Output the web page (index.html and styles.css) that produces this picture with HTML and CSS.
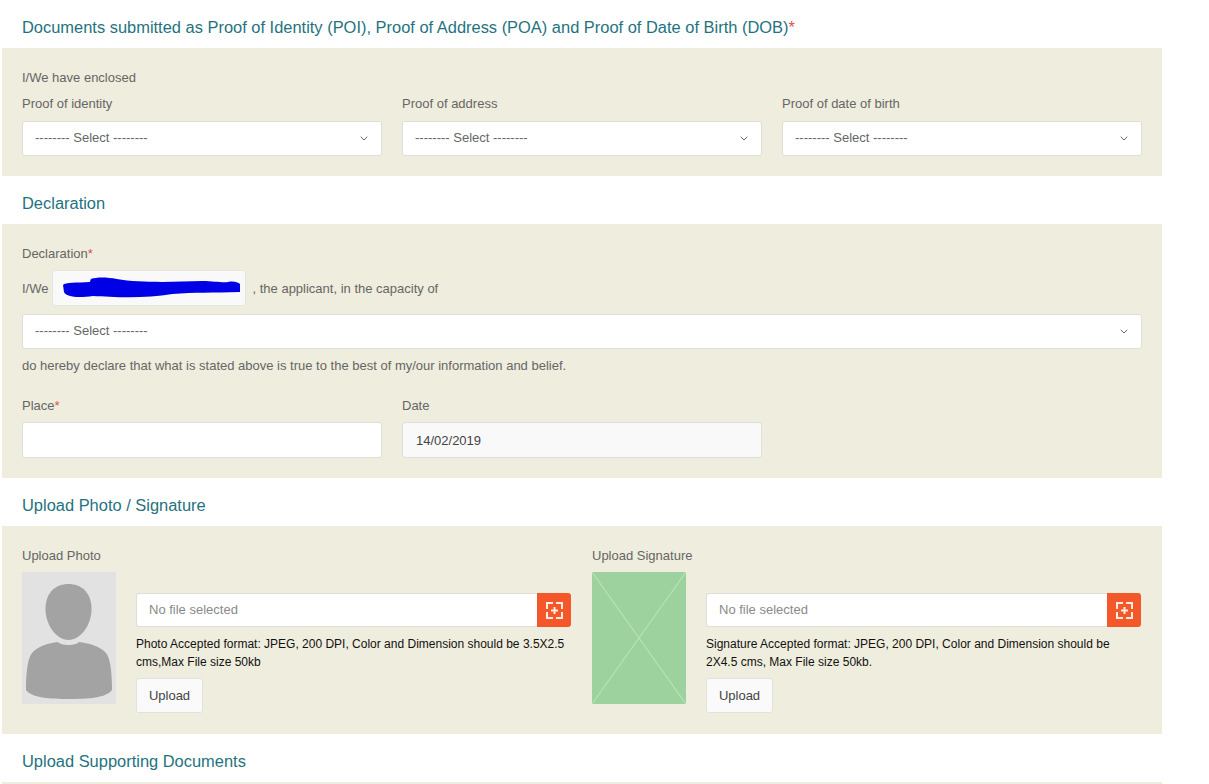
FILE: index.html
```html
<!DOCTYPE html>
<html lang="en">
<head>
<meta charset="utf-8">
<title>Documents</title>
<link rel="stylesheet" href="styles.css">
</head>
<body>
<main class="page">
  <h2 class="heading">Documents submitted as Proof of Identity (POI), Proof of Address (POA) and Proof of Date of Birth (DOB)<span class="req">*</span></h2>
  <section class="panel panel-docs">
    <p class="label label-tight">I/We have enclosed</p>
    <div class="cols3">
      <div class="field">
        <label class="label">Proof of identity</label>
        <div class="select"><span>-------- Select --------</span><svg class="chev" viewBox="0 0 8 5"><path d="M.7.8 4 4 7.3.8"/></svg></div>
      </div>
      <div class="field">
        <label class="label">Proof of address</label>
        <div class="select"><span>-------- Select --------</span><svg class="chev" viewBox="0 0 8 5"><path d="M.7.8 4 4 7.3.8"/></svg></div>
      </div>
      <div class="field">
        <label class="label">Proof of date of birth</label>
        <div class="select"><span>-------- Select --------</span><svg class="chev" viewBox="0 0 8 5"><path d="M.7.8 4 4 7.3.8"/></svg></div>
      </div>
    </div>
  </section>

  <h2 class="heading">Declaration</h2>
  <section class="panel panel-decl">
    <p class="label">Declaration<span class="req">*</span></p>
    <div class="iwe">
      <span>I/We</span>
      <div class="name-box">
        <svg class="scribble" viewBox="0 0 178 22" preserveAspectRatio="none"><path d="M0 8C2 5 14 6 27 5L28 2C34 0 44 0 54 2C78 6 110 5 140 4C152 4 160 6 166 5C171 4 176 5 178 7L178 15C150 16 132 15 110 17C82 22 50 20 30 19C15 21 3 20 1 15Z"/></svg>
      </div>
      <span>, the applicant, in the capacity of</span>
    </div>
    <div class="select"><span>-------- Select --------</span><svg class="chev" viewBox="0 0 8 5"><path d="M.7.8 4 4 7.3.8"/></svg></div>
    <p class="label hereby">do hereby declare that what is stated above is true to the best of my/our information and belief.</p>
    <div class="cols3 place-row">
      <div class="field">
        <label class="label">Place<span class="req">*</span></label>
        <div class="input"></div>
      </div>
      <div class="field">
        <label class="label">Date</label>
        <div class="input input-ro">14/02/2019</div>
      </div>
    </div>
  </section>

  <h2 class="heading">Upload Photo / Signature</h2>
  <section class="panel panel-upload">
    <div class="cols2">
      <div>
        <p class="label">Upload Photo</p>
        <div class="upload">
          <svg class="thumb" viewBox="0 0 94 132">
            <rect width="94" height="132" fill="#e2e2e2"/>
            <path fill="#a3a3a3" d="M46.500 12C59 12 69 20 69.500 36C70 52 59 68 46.500 68C34 68 23 52 23.500 36C24 20 34 12 46.500 12Z"/>
            <path fill="#a3a3a3" d="M36 70C39 74 54 74 57 70C66 71 78 74 84 81C89 87 90 104 90 118C84 126 66 127 47 127C28 127 10 126 4 118C4 104 5 87 10 81C16 74 27 71 36 70Z"/>
          </svg>
          <div class="upload-main">
            <div class="filebar">
              <div class="fileinput">No file selected</div>
              <div class="filebtn"><svg viewBox="0 0 17 17"><path d="M1 7V1h6M10 1h6v6M16 10v6h-6M7 16H1v-6M8.500 5v7M5 8.500h7"/></svg></div>
            </div>
            <p class="note">Photo Accepted format: JPEG, 200 DPI, Color and Dimension should be 3.5X2.5 cms,Max File size 50kb</p>
            <button class="btn" type="button">Upload</button>
          </div>
        </div>
      </div>
      <div>
        <p class="label">Upload Signature</p>
        <div class="upload">
          <svg class="thumb" viewBox="0 0 94 132">
            <rect width="94" height="132" fill="#9dd29f"/>
            <path stroke="#b9e0b5" stroke-width="1.200" fill="none" d="M0 0 94 132M94 0 0 132"/>
          </svg>
          <div class="upload-main">
            <div class="filebar">
              <div class="fileinput">No file selected</div>
              <div class="filebtn"><svg viewBox="0 0 17 17"><path d="M1 7V1h6M10 1h6v6M16 10v6h-6M7 16H1v-6M8.500 5v7M5 8.500h7"/></svg></div>
            </div>
            <p class="note">Signature Accepted format: JPEG, 200 DPI, Color and Dimension should be 2X4.5 cms, Max File size 50kb.</p>
            <button class="btn" type="button">Upload</button>
          </div>
        </div>
      </div>
    </div>
  </section>

  <h2 class="heading">Upload Supporting Documents</h2>
  <section class="panel panel-next"></section>
</main>
</body>
</html>
```
FILE: styles.css
```css
* { box-sizing: border-box; }
html, body { margin: 0; background: #fff; height: 784px; overflow: hidden; }
body { font-family: "Liberation Sans", Arial, sans-serif; font-size: 13px; color: #666; }
.page { width: 1160px; margin-left: 2px; }
.heading {
  margin: 0;
  height: 48px;
  padding: 18px 0 0 20px;
  font-size: 16.450px;
  line-height: 18px;
  font-weight: 400;
  color: #1f7380;
}
.req { color: #d9534f; }
.panel { background: #efeddd; padding: 0 20px; }
.panel-docs { height: 128px; padding-top: 22px; }
.panel-decl { height: 254px; padding-top: 22px; }
.panel-upload { height: 208px; padding-top: 22px; }
.panel-next { height: 2px; }
.label { display: block; margin: 0; font-size: 13px; line-height: 16px; color: #666; }
.label-tight { margin-bottom: 10px; }
.cols3 { display: grid; grid-template-columns: repeat(3, 360px); column-gap: 20px; }
.cols2 { display: grid; grid-template-columns: 549px 549px; column-gap: 21px; }
.field .label { margin-bottom: 9px; }
.select {
  display: flex;
  align-items: center;
  justify-content: space-between;
  height: 35px;
  padding: 0 13px 2px 12px;
  background: #fff;
  border: 1px solid #dfdfd8;
  border-radius: 3px;
  color: #666;
}
.chev { width: 8px; height: 5px; fill: none; stroke: #555; stroke-width: .9; margin-top: 2px; }
.iwe { display: flex; align-items: center; gap: 3px; margin: 8px 0 8px; height: 36px; }
.iwe span { color: #666; }
.name-box {
  width: 194px;
  height: 36px;
  margin-right: 4px;
  padding: 6px 5px 6px 10px;
  background: #f9f9f9;
  border: 1px solid #e6e6e0;
  border-radius: 3px;
}
.scribble { display: block; width: 100%; height: 100%; fill: #0000e6; }
.hereby { margin-top: 9px; }
.place-row { margin-top: 24px; }
.place-row .label { margin-bottom: 8px; }
.input {
  height: 36px;
  padding: 0 13px;
  display: flex;
  align-items: center;
  background: #fff;
  border: 1px solid #dfdfd8;
  border-radius: 3px;
}
.input-ro { background: #f9f9f9; color: #444; }
.upload { display: flex; gap: 20px; margin-top: 8px; }
.thumb { display: block; width: 94px; height: 132px; flex: none; }
.upload-main { flex: 1; padding-top: 21px; }
.filebar { display: flex; height: 34px; }
.fileinput {
  flex: 1;
  display: flex;
  align-items: center;
  padding: 0 12px 2px;
  background: #fff;
  border: 1px solid #dfdfd8;
  border-right: 0;
  border-radius: 3px 0 0 3px;
  color: #8a8a8a;
}
.filebtn {
  width: 34px;
  display: flex;
  align-items: center;
  justify-content: center;
  background: #f4572a;
  border-radius: 0 3px 3px 0;
}
.filebtn svg { width: 17px; height: 17px; fill: none; stroke: #fbeee0; stroke-width: 2; }
.note { margin: 8px 0 7px; font-size: 12px; line-height: 18px; color: #111; }
.btn {
  display: block;
  width: 67px;
  height: 35px;
  padding: 0 0 1px;
  background: #fafafa;
  border: 1px solid #e2e2dc;
  border-radius: 3px;
  font: 13px "Liberation Sans", Arial, sans-serif;
  color: #444;
}
```
